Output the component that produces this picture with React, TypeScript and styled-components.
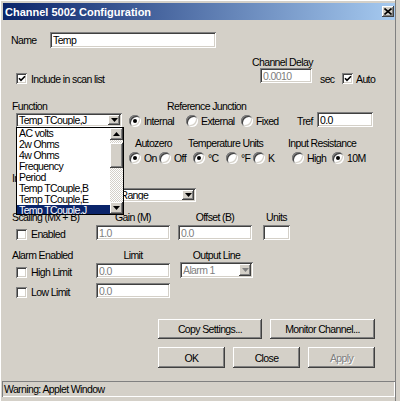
import React from "react";
import styled, { createGlobalStyle, css } from "styled-components";

const FONT = `"Liberation Sans", Arial, sans-serif`;
const SIZE = "10.5px";
const TRACK = "-0.62px";

const GlobalStyle = createGlobalStyle`
  html, body { margin: 0; padding: 0; background: #d4d0c8; }
  body { font-family: ${FONT}; font-size: ${SIZE}; letter-spacing: ${TRACK}; color: #000; overflow: hidden; }
  * { box-sizing: border-box; }
`;

const sunken = css`
  box-shadow: inset 1px 1px 0 #808080, inset -1px -1px 0 #fff,
    inset 2px 2px 0 #404040, inset -2px -2px 0 #d4d0c8;
`;

const raised = css`
  box-shadow: inset -1px -1px 0 #404040, inset 1px 1px 0 #fff,
    inset -2px -2px 0 #808080, inset 2px 2px 0 #d4d0c8;
`;

const Frame = styled.div`
  position: relative;
  width: 396px;
  height: 401px;
  padding-left: 2px;
  border-right: 1px solid #808080;
  background: #d4d0c8;
  box-shadow: inset 1px 1px 0 #fff;
  display: flex;
  flex-direction: column;
`;

const TitleBar = styled.div`
  flex: 0 0 17px;
  margin: 3px 0 0 1px;
  padding: 0 1px 0 2px;
  display: flex;
  align-items: center;
  justify-content: space-between;
  background: linear-gradient(to right, #0a246a, #a6caf0);
  color: #fff;
  font-weight: bold;
  font-size: 11px;
  letter-spacing: 0;
  white-space: nowrap;
`;

const CloseBtn = styled.div`
  width: 12px;
  height: 11px;
  background: #d4d0c8;
  ${raised};
  display: flex;
  align-items: center;
  justify-content: center;
`;

const Row = styled.div<{ $h: number; $mt?: number; $align?: string }>`
  flex: 0 0 auto;
  display: flex;
  align-items: ${(p) => p.$align ?? "center"};
  height: ${(p) => p.$h}px;
  margin-top: ${(p) => p.$mt ?? 0}px;
`;

const Gap = styled.div<{ $w: number }>`
  flex: 0 0 ${(p) => p.$w}px;
`;

const Text = styled.div<{ $w?: number; $center?: boolean }>`
  flex: 0 0 ${(p) => (p.$w ? `${p.$w}px` : "auto")};
  text-align: ${(p) => (p.$center ? "center" : "left")};
  white-space: nowrap;
  line-height: 12px;
`;

const Field = styled.input<{ $w: number; $h?: number; $top?: boolean }>`
  flex: 0 0 ${(p) => p.$w}px;
  width: ${(p) => p.$w}px;
  height: ${(p) => p.$h ?? 15}px;
  align-self: ${(p) => (p.$top ? "flex-start" : "auto")};
  border: 0;
  margin: 0;
  padding: 0 3px;
  font-family: ${FONT};
  font-size: ${SIZE};
  letter-spacing: ${TRACK};
  background: #fff;
  color: #000;
  outline: none;
  ${sunken};
  &:disabled {
    color: #808080;
    background: #fff;
    -webkit-text-fill-color: #808080;
    opacity: 1;
  }
`;

const CheckGroup = styled.div<{ $w?: number; $gap?: number }>`
  flex: 0 0 ${(p) => (p.$w ? `${p.$w}px` : "auto")};
  display: flex;
  align-items: center;
  gap: ${(p) => p.$gap ?? 4}px;
  height: 12px;
  white-space: nowrap;
  line-height: 12px;
`;

const Box = styled.span`
  flex: 0 0 11px;
  width: 11px;
  height: 11px;
  background: #fff;
  ${sunken};
  display: flex;
  align-items: center;
  justify-content: center;
`;

const RadioGroup = styled.div<{ $w: number }>`
  flex: 0 0 ${(p) => p.$w}px;
  display: flex;
  align-items: center;
  gap: 3px;
  height: 12px;
  white-space: nowrap;
  line-height: 12px;
`;

const RadioCircle = styled.span`
  flex: 0 0 12px;
  width: 12px;
  height: 12px;
  border-radius: 50%;
  background: #fff;
  ${sunken};
  display: flex;
  align-items: center;
  justify-content: center;
`;

const RadioDot = styled.span`
  width: 4px;
  height: 4px;
  border-radius: 50%;
  background: #000;
`;

const Combo = styled.div<{ $w: number; $h: number; $disabled?: boolean }>`
  flex: 0 0 ${(p) => p.$w}px;
  width: ${(p) => p.$w}px;
  height: ${(p) => p.$h}px;
  display: flex;
  align-items: stretch;
  padding: 2px;
  background: #fff;
  color: ${(p) => (p.$disabled ? "#808080" : "#000")};
  ${sunken};
`;

const ComboText = styled.span`
  flex: 1;
  padding-left: 1px;
  white-space: nowrap;
  overflow: hidden;
  display: flex;
  align-items: center;
`;

const ComboArrow = styled.span`
  flex: 0 0 12px;
  background: #d4d0c8;
  ${raised};
  display: flex;
  align-items: center;
  justify-content: center;
`;

const Btn = styled.button<{ $w: number; $h: number }>`
  flex: 0 0 ${(p) => p.$w}px;
  width: ${(p) => p.$w}px;
  height: ${(p) => p.$h}px;
  border: 0;
  margin: 0;
  padding: 0;
  background: #d4d0c8;
  font-family: ${FONT};
  font-size: ${SIZE};
  letter-spacing: ${TRACK};
  color: #000;
  ${raised};
  &:disabled {
    color: #808080;
    text-shadow: 1px 1px 0 #fff;
  }
`;

const StatusBar = styled.div`
  flex: 0 0 16px;
  width: 393px;
  margin-top: 13px;
  padding-left: 2px;
  display: flex;
  align-items: center;
  box-shadow: inset 1px 1px 0 #808080, inset -1px -1px 0 #fff;
  white-space: nowrap;
`;

const ListPopup = styled.div`
  position: absolute;
  left: 16px;
  top: 127px;
  width: 108px;
  height: 88px;
  border: 1px solid #000;
  background: #fff;
  display: flex;
  overflow: hidden;
`;

const ListItems = styled.div`
  flex: 1;
  display: flex;
  flex-direction: column;
`;

const ListItem = styled.div<{ $sel?: boolean }>`
  flex: 0 0 11px;
  height: 11px;
  line-height: 11px;
  padding-left: 2px;
  white-space: nowrap;
  background: ${(p) => (p.$sel ? "#0a246a" : "transparent")};
  color: ${(p) => (p.$sel ? "#fff" : "#000")};
`;

const ScrollBar = styled.div`
  flex: 0 0 13px;
  display: flex;
  flex-direction: column;
  background: repeating-conic-gradient(#fff 0 25%, #d4d0c8 0 50%) 0 0 / 2px 2px;
`;

const ScrollBtn = styled.div`
  flex: 0 0 12px;
  background: #d4d0c8;
  ${raised};
  display: flex;
  align-items: center;
  justify-content: center;
`;

const Thumb = styled.div`
  flex: 0 0 25px;
  margin-top: 3px;
  background: #d4d0c8;
  ${raised};
`;

const Track = styled.div`
  flex: 1;
`;

const Down = ({ color = "#000" }: { color?: string }) => (
  <svg width="7" height="4" viewBox="0 0 7 4">
    <polygon points="0,0 7,0 3.5,4" fill={color} />
  </svg>
);

const Up = () => (
  <svg width="7" height="4" viewBox="0 0 7 4">
    <polygon points="0,4 7,4 3.5,0" fill="#000" />
  </svg>
);

const Check = ({ on, label, w, gap }: { on?: boolean; label: string; w?: number; gap?: number }) => (
  <CheckGroup $w={w} $gap={gap}>
    <Box>
      {on && (
        <svg width="8" height="7" viewBox="0 0 8 7">
          <polyline points="1,3.2 3,5.3 7,1.2" fill="none" stroke="#000" strokeWidth="1.6" />
        </svg>
      )}
    </Box>
    {label}
  </CheckGroup>
);

const Radio = ({ on, label, w }: { on?: boolean; label: string; w: number }) => (
  <RadioGroup $w={w}>
    <RadioCircle>{on && <RadioDot />}</RadioCircle>
    {label}
  </RadioGroup>
);

const Select = ({ w, h, value, disabled }: { w: number; h: number; value: string; disabled?: boolean }) => (
  <Combo $w={w} $h={h} $disabled={disabled}>
    <ComboText>{value}</ComboText>
    <ComboArrow>
      <Down color={disabled ? "#808080" : "#000"} />
    </ComboArrow>
  </Combo>
);

const functions = [
  "AC volts",
  "2w Ohms",
  "4w Ohms",
  "Frequency",
  "Period",
  "Temp TCouple,B",
  "Temp TCouple,E",
  "Temp TCouple,J",
];

export default function App() {
  return (
    <>
      <GlobalStyle />
      <Frame>
        <TitleBar>
          <span>Channel 5002 Configuration</span>
          <CloseBtn>
            <svg width="8" height="7" viewBox="0 0 8 7">
              <path d="M0.5 0.5 L7.5 6.5 M7.5 0.5 L0.5 6.5" stroke="#000" strokeWidth="1.6" />
            </svg>
          </CloseBtn>
        </TitleBar>

        <Row $h={16} $mt={12}>
          <Gap $w={9} />
          <Text $w={39}>Name</Text>
          <Field $w={166} $h={16} defaultValue="Temp" />
        </Row>

        <Row $h={12} $mt={8}>
          <Gap $w={250} />
          <Text>Channel Delay</Text>
        </Row>

        <Row $h={21}>
          <Gap $w={14} />
          <Check on label="Include in scan list" w={244} />
          <Field $w={52} $top disabled defaultValue="0.0010" />
          <Gap $w={8} />
          <Text $w={22}>sec</Text>
          <Check on label="Auto" gap={3} />
        </Row>

        <Row $h={12} $mt={11}>
          <Gap $w={10} />
          <Text $w={155}>Function</Text>
          <Text>Reference Junction</Text>
        </Row>

        <Row $h={15} $align="flex-end">
          <Gap $w={14} />
          <Select w={106} h={14} value="Temp TCouple,J" />
          <Gap $w={7} />
          <Radio on label="Internal" w={57} />
          <Radio label="External" w={55} />
          <Radio label="Fixed" w={56} />
          <Text $w={20}>Tref</Text>
          <Field $w={56} defaultValue="0.0" />
        </Row>

        <Row $h={12} $mt={10}>
          <Gap $w={133} />
          <Text $w={53}>Autozero</Text>
          <Text $w={100}>Temperature Units</Text>
          <Text>Input Resistance</Text>
        </Row>

        <Row $h={12} $mt={3}>
          <Gap $w={127} />
          <Radio on label="On" w={30} />
          <Radio label="Off" w={34} />
          <Radio on label="°C" w={33} />
          <Radio label="°F" w={27} />
          <Radio label="K" w={39} />
          <Radio label="High" w={40} />
          <Radio on label="10M" w={40} />
        </Row>

        <Row $h={12} $mt={8}>
          <Gap $w={10} />
          <Text>Input Range</Text>
        </Row>

        <Row $h={14} $mt={4}>
          <Gap $w={94} />
          <Select w={100} h={14} value="Auto Range" />
        </Row>

        <Row $h={12} $mt={9}>
          <Gap $w={10} />
          <Text $w={84}>Scaling (Mx + B)</Text>
          <Text $w={74} $center>Gain (M)</Text>
          <Gap $w={8} />
          <Text $w={74} $center>Offset (B)</Text>
          <Gap $w={11} />
          <Text $w={27} $center>Units</Text>
        </Row>

        <Row $h={15} $mt={2} $align="flex-end">
          <Gap $w={14} />
          <Check label="Enabled" w={80} />
          <Field $w={74} disabled defaultValue="1.0" />
          <Gap $w={8} />
          <Field $w={74} disabled defaultValue="0.0" />
          <Gap $w={11} />
          <Field $w={27} defaultValue="" />
        </Row>

        <Row $h={12} $mt={9}>
          <Gap $w={10} />
          <Text $w={84}>Alarm Enabled</Text>
          <Text $w={74} $center>Limit</Text>
          <Gap $w={10} />
          <Text $w={73} $center>Output Line</Text>
        </Row>

        <Row $h={16} $mt={1} $align="flex-end">
          <Gap $w={14} />
          <Check label="High Limit" w={80} />
          <Field $w={74} disabled defaultValue="0.0" />
          <Gap $w={10} />
          <Select w={73} h={16} value="Alarm 1" disabled />
        </Row>

        <Row $h={15} $mt={5} $align="flex-end">
          <Gap $w={14} />
          <Check label="Low Limit" w={80} />
          <Field $w={74} disabled defaultValue="0.0" />
        </Row>

        <Row $h={20} $mt={21}>
          <Gap $w={156} />
          <Btn $w={104} $h={20}>Copy Settings...</Btn>
          <Gap $w={8} />
          <Btn $w={105} $h={20}>Monitor Channel...</Btn>
        </Row>

        <Row $h={21} $mt={8}>
          <Gap $w={156} />
          <Btn $w={67} $h={21}>OK</Btn>
          <Gap $w={8} />
          <Btn $w={67} $h={21}>Close</Btn>
          <Gap $w={8} />
          <Btn $w={67} $h={21} disabled>Apply</Btn>
        </Row>

        <StatusBar>Warning: Applet Window</StatusBar>

        <ListPopup>
          <ListItems>
            {functions.map((f, i) => (
              <ListItem key={f} $sel={i === functions.length - 1}>
                {f}
              </ListItem>
            ))}
          </ListItems>
          <ScrollBar>
            <ScrollBtn>
              <Up />
            </ScrollBtn>
            <Thumb />
            <Track />
            <ScrollBtn>
              <Down />
            </ScrollBtn>
          </ScrollBar>
        </ListPopup>
      </Frame>
    </>
  );
}
